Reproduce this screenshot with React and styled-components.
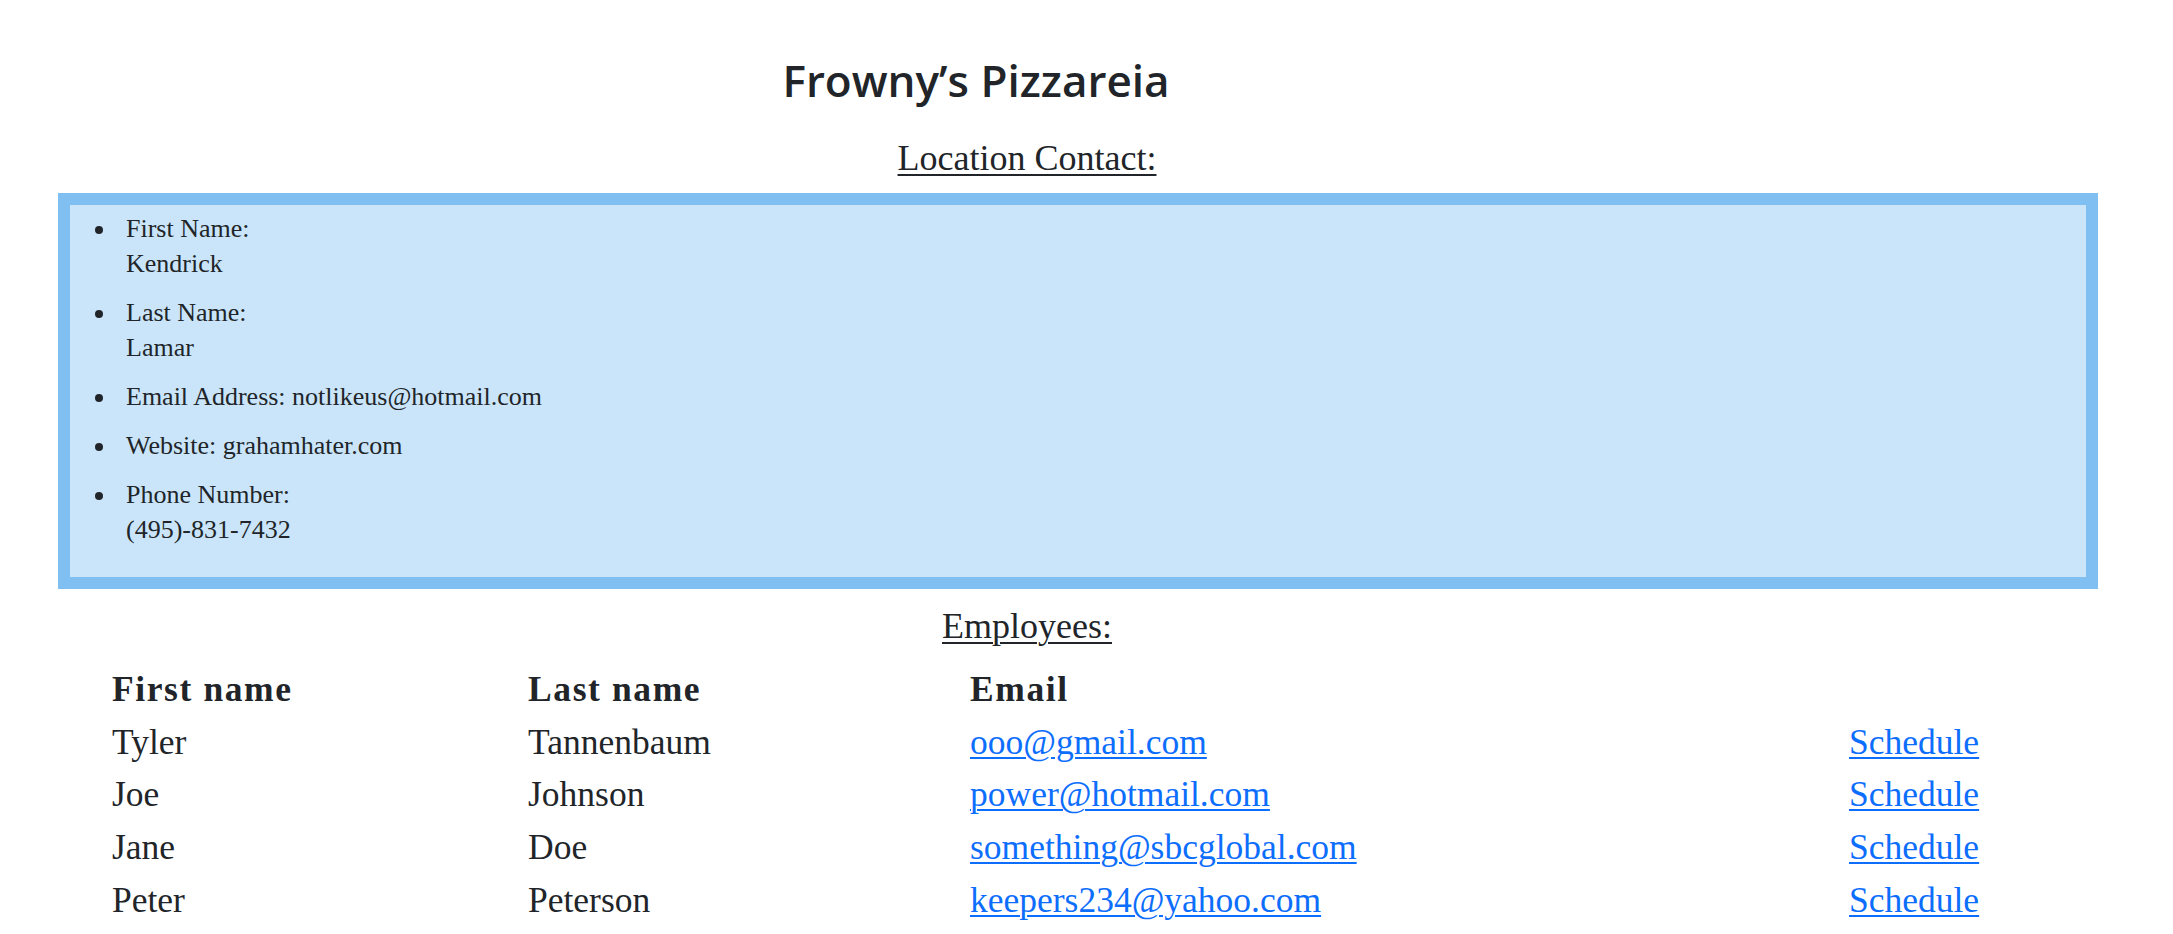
import React from "react";
import styled, { createGlobalStyle } from "styled-components";

const GlobalStyle = createGlobalStyle`
  html, body {
    margin: 0;
    padding: 0;
    background: #ffffff;
  }
  body {
    color: #212529;
    font-family: "Liberation Serif", "Times New Roman", serif;
  }
`;

const contact = [
  { label: "First Name:", value: "Kendrick", wrap: true },
  { label: "Last Name:", value: "Lamar", wrap: true },
  { label: "Email Address:", value: "notlikeus@hotmail.com" },
  { label: "Website:", value: "grahamhater.com" },
  { label: "Phone Number:", value: "(495)-831-7432", wrap: true },
];

const employees = [
  { first: "Tyler", last: "Tannenbaum", email: "ooo@gmail.com" },
  { first: "Joe", last: "Johnson", email: "power@hotmail.com" },
  { first: "Jane", last: "Doe", email: "something@sbcglobal.com" },
  { first: "Peter", last: "Peterson", email: "keepers234@yahoo.com" },
];

const App = () => {
  return (
    <Page>
      <GlobalStyle />
      <Title>Frowny’s Pizzareia</Title>
      <SectionHeading>Location Contact:</SectionHeading>

      <ContactBox>
        <ContactList>
          {contact.map((c) => (
            <li key={c.label}>
              {c.label}
              {c.wrap ? <br /> : " "}
              {c.value}
            </li>
          ))}
        </ContactList>
      </ContactBox>

      <SectionHeading $compact>Employees:</SectionHeading>

      <Table>
        <HeadCell>First name</HeadCell>
        <HeadCell>Last name</HeadCell>
        <HeadCell>Email</HeadCell>
        <HeadCell />
        {employees.map((e) => (
          <React.Fragment key={e.email}>
            <Cell>{e.first}</Cell>
            <Cell>{e.last}</Cell>
            <Cell>
              <Link href="#">{e.email}</Link>
            </Cell>
            <Cell>
              <Link href="#">Schedule</Link>
            </Cell>
          </React.Fragment>
        ))}
      </Table>
    </Page>
  );
};

const Page = styled.div`
  width: 2173px;
  padding-bottom: 10px;
`;

const Title = styled.h1`
  width: 1952px;
  margin: 50px 0 0;
  text-align: center;
  font-family: "Open Sans", "Noto Sans", sans-serif;
  font-weight: 600;
  font-size: 44px;
  line-height: 60px;
  color: #212529;
`;

const SectionHeading = styled.h2`
  width: 2054px;
  margin: ${(p) => (p.$compact ? "17px 0 0" : "28px 0 0")};
  text-align: center;
  font-family: "Liberation Serif", "Times New Roman", serif;
  font-weight: 400;
  font-size: 36px;
  line-height: 40px;
  text-decoration: underline;
  text-decoration-thickness: 2px;
  text-underline-offset: 4px;
`;

const ContactBox = styled.div`
  margin: 15px 0 0 58px;
  width: 2040px;
  box-sizing: border-box;
  border: 12px solid #80bff2;
  background: #cae5fa;
`;

const ContactList = styled.ul`
  margin: 0;
  padding: 6px 0 30px 47px;
  list-style: disc outside;
  font-size: 26px;
  line-height: 35px;

  li {
    padding-left: 9px;
  }

  li + li {
    margin-top: 14px;
  }
`;

const Table = styled.div`
  display: grid;
  grid-template-columns: 416px 442px 879px auto;
  margin-top: 17px;
  padding-left: 112px;
  font-size: 35.5px;
  line-height: 52.7px;
`;

const HeadCell = styled.div`
  font-weight: 700;
  letter-spacing: 1.6px;
`;

const Cell = styled.div`
  white-space: nowrap;
`;

const Link = styled.a`
  color: #0d6efd;
  text-decoration: underline;
  text-decoration-thickness: 2px;
  text-underline-offset: 3px;
`;

export default App;
